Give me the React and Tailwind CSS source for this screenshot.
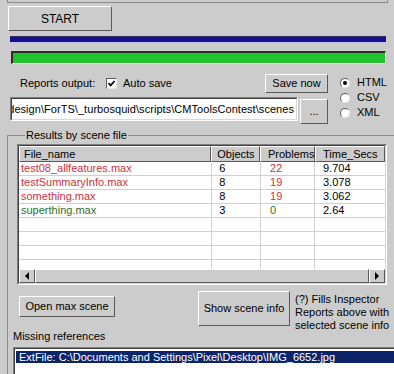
import React from 'react';

const raised =
  'border border-t-white border-l-white border-r-[#5a5a5a] border-b-[#5a5a5a] bg-[#cccccc]';

function Btn({ className, children }) {
  return (
    <div className={`${raised} flex items-center justify-center ${className}`}>
      {children}
    </div>
  );
}

function Sunken({ className, innerClass, children }) {
  return (
    <div className={`border border-t-[#808080] border-l-[#808080] border-r-white border-b-white ${className}`}>
      <div className={`h-full border border-t-[#404040] border-l-[#404040] border-r-[#d8d8d8] border-b-[#d8d8d8] overflow-hidden ${innerClass}`}>
        {children}
      </div>
    </div>
  );
}

function Radio({ checked, label }) {
  return (
    <div className="h-[15px] flex items-center gap-[7px]">
      <div className="w-[10px] h-[10px] rounded-full bg-white border border-t-[#606060] border-l-[#606060] border-r-[#e8e8e8] border-b-[#e8e8e8] flex items-center justify-center">
        {checked && <div className="w-[4px] h-[4px] rounded-full bg-black" />}
      </div>
      <span>{label}</span>
    </div>
  );
}

const rows = [
  { name: 'test08_allfeatures.max', obj: '6', prob: '22', time: '9.704', bad: true },
  { name: 'testSummaryInfo.max', obj: '8', prob: '19', time: '3.078', bad: true },
  { name: 'something.max', obj: '8', prob: '19', time: '3.062', bad: true },
  { name: 'superthing.max', obj: '3', prob: '0', time: '2.64', bad: false },
  {}, {}, {}, {},
];

export default function App() {
  return (
    <div className="w-[394px] h-[374px] overflow-hidden bg-[#cccccc] text-[11px] leading-none text-black font-['Liberation_Sans',Arial,sans-serif]">
      {/* edge of the rollout above */}
      <div className="ml-[7px] mr-[6px] h-[3px] border-x border-b border-[#8a8a8a]" />

      <Btn className="ml-[8px] mt-[3px] w-[104px] h-[25px] text-[12px]">START</Btn>

      {/* progress bars */}
      <div className="mt-[5px] ml-[10px] mr-[8px] h-[8px] bg-[#160e8c] border-t border-t-[#34306a] border-b-2 border-b-[#c8c4f0]" />
      <div className="mt-[7px] ml-[11px] mr-[8px] h-[13px] bg-[#22c22e] border-t-2 border-l-2 border-t-[#2c2c2c] border-l-[#2c2c2c] border-b border-r border-b-[#f0f0f0] border-r-[#f0f0f0]" />

      {/* reports output */}
      <div className="mt-[10px] flex">
        <div className="ml-[10px] w-[318px]">
          <div className="h-[18px] flex items-center">
            <span className="ml-[10px] w-[86px]">Reports output:</span>
            <div className="w-[11px] h-[11px] bg-white border border-t-[#606060] border-l-[#606060] border-r-[#e8e8e8] border-b-[#e8e8e8] flex items-center justify-center">
              <svg width="9" height="9" viewBox="0 0 9 9">
                <path d="M1.5 4.2 L3.6 6.4 L7.6 2" stroke="#000" strokeWidth="1.7" fill="none" />
              </svg>
            </div>
            <span className="ml-[6px]">Auto save</span>
            <div className="flex-1" />
            <Btn className="w-[63px] h-[19px]">Save now</Btn>
          </div>
          <div className="mt-[5px] flex items-start">
            <Sunken className="w-[288px] h-[24px] bg-white" innerClass="flex items-center justify-end pr-[2px]">
              <span className="whitespace-nowrap tracking-[0.05px]">design\ForTS\_turbosquid\scripts\CMToolsContest\scenes</span>
            </Sunken>
            <Btn className="ml-[2px] mt-[2px] w-[28px] h-[25px]">...</Btn>
          </div>
        </div>
        <div className="ml-[12px] mt-[1px]">
          <Radio checked label="HTML" />
          <Radio label="CSV" />
          <Radio label="XML" />
        </div>
      </div>

      {/* results group */}
      <fieldset className="mt-[5px] ml-[7px] w-[381px] h-[260px] border border-[#8c8c8c] px-[9px]">
        <legend className="ml-[8px] px-[1px] leading-[12px]">Results by scene file</legend>

        <Sunken className="mt-[3px] w-[370px] h-[141px]" innerClass="bg-white flex flex-col">
          <div className="h-[16px] flex shrink-0 bg-[#cccccc] whitespace-nowrap">
            <div className={`${raised} w-[198px] pl-[4px] flex items-center`}>File_name</div>
            <div className={`${raised} w-[50px] pl-[5px] flex items-center`}>Objects</div>
            <div className={`${raised} w-[55px] pl-[7px] flex items-center`}>Problems</div>
            <div className={`${raised} w-[70px] pl-[7px] flex items-center shrink-0`}>Time_Secs</div>
          </div>
          <div className="flex-1 overflow-hidden">
            {rows.map((r, i) => (
              <div key={i} className="h-[14px] flex border-b border-[#d0d0d0] whitespace-nowrap">
                <div className={`w-[198px] pl-[2px] flex items-center border-r border-[#d0d0d0] ${r.bad ? 'text-[#c8343f]' : 'text-[#2f6e2f]'}`}>{r.name}</div>
                <div className="w-[50px] pl-[7px] flex items-center border-r border-[#d0d0d0]">{r.obj}</div>
                <div className={`w-[55px] pl-[9px] flex items-center border-r border-[#d0d0d0] ${r.bad ? 'text-[#c8343f]' : 'text-[#2f6e2f]'}`}>{r.prob}</div>
                <div className="w-[70px] pl-[8px] flex items-center shrink-0">{r.time}</div>
              </div>
            ))}
          </div>
          <div className="h-[14px] flex shrink-0 bg-[#cccccc]">
            <div className={`${raised} w-[16px] flex items-center justify-center`}>
              <div className="w-0 h-0 border-y-[4px] border-y-transparent border-r-[4px] border-r-black" />
            </div>
            <div className={`${raised} flex-1`} />
            <div className={`${raised} w-[16px] flex items-center justify-center`}>
              <div className="w-0 h-0 border-y-[4px] border-y-transparent border-l-[4px] border-l-black" />
            </div>
          </div>
        </Sunken>

        <div className="flex items-start">
          <Btn className="ml-[2px] mt-[11px] w-[96px] h-[21px]">Open max scene</Btn>
          <Btn className="ml-[83px] mt-[6px] w-[92px] h-[35px]">Show scene info</Btn>
          <div className="ml-[5px] mt-[8px] leading-[13px] whitespace-nowrap">
            <div>(?) Fills Inspector</div>
            <div>Reports above with</div>
            <div>selected scene info</div>
          </div>
        </div>

        <div className="-mt-[1px] -ml-[4px]">Missing references</div>
        <Sunken className="mt-[5px] -ml-[4px] w-[390px] h-[40px]" innerClass="bg-white pt-[2px] pl-[1px]">
          <div className="h-[12px] bg-[#0b246a] text-white flex items-center pl-[3px] whitespace-nowrap">
            ExtFile: C:\Documents and Settings\Pixel\Desktop\IMG_6652.jpg
          </div>
        </Sunken>
      </fieldset>
    </div>
  );
}
